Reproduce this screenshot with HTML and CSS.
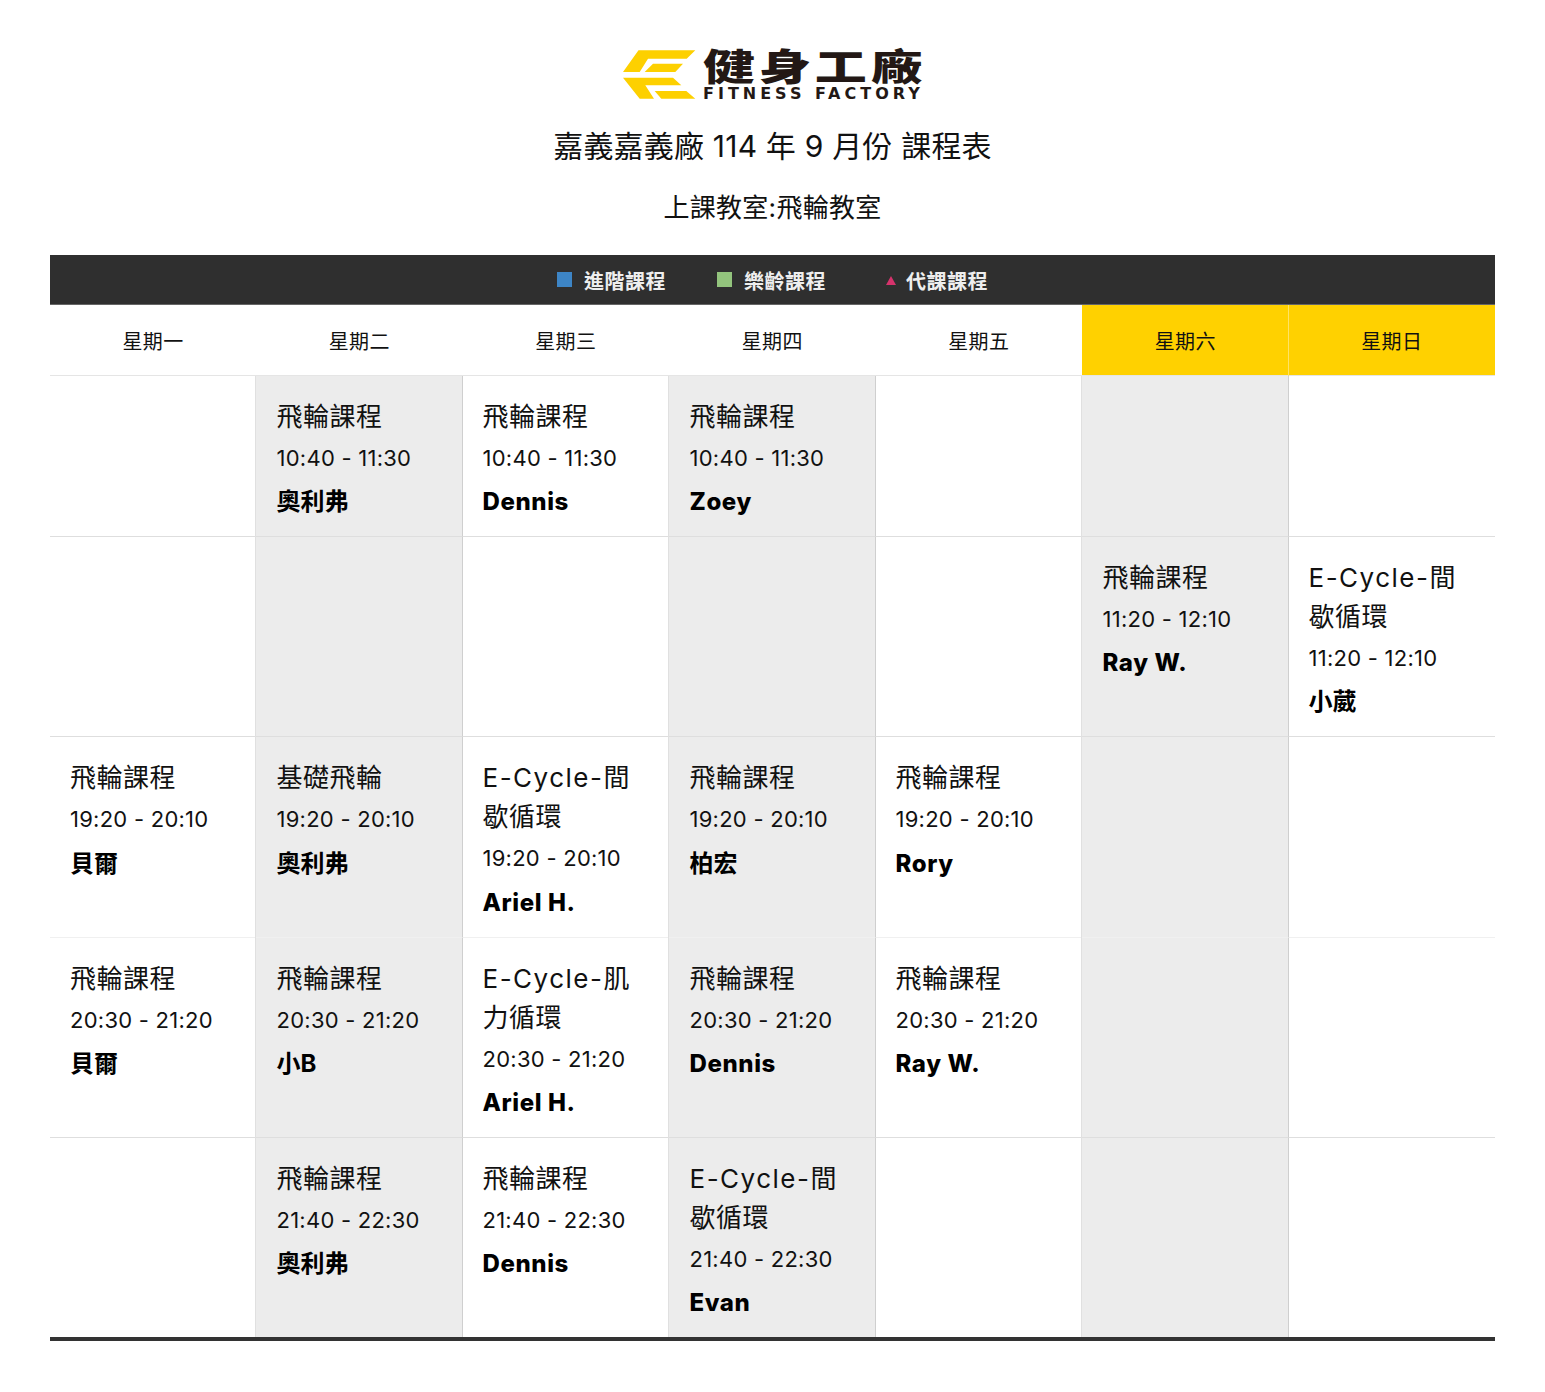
FILE: index.html
```html
<!DOCTYPE html>
<html lang="zh-Hant">
<head>
<meta charset="utf-8">
<title>課程表</title>
<link rel="stylesheet" href="styles.css">
</head>
<body>
<header class="head">
  <div class="logo">
    <svg class="logo-mark" viewBox="0 0 82 58" width="82" height="58" aria-hidden="true">
      <polygon points="20.5,4.3 77.3,4.3 68.7,12.7 30,12.7 21.7,26 5,26"/>
      <polygon points="35,17.7 65,17.7 57.3,26 26.7,26"/>
      <polygon points="5,31.7 55,31.7 63.3,39.3 27.3,39.3 36,52.7 21.7,52.7"/>
      <polygon points="36.7,45 68.3,45 77.3,52.7 43.3,52.7"/>
    </svg>
    <div class="logo-text">
      <div class="logo-zh">健身工廠</div>
      <div class="logo-en">FITNESS FACTORY</div>
    </div>
  </div>
  <h1 class="title">嘉義嘉義廠 114 年 9 月份 課程表</h1>
  <h2 class="room">上課教室:飛輪教室</h2>
</header>
<main class="schedule">
  <div class="legend">
    <span class="legend-item"><i class="sq sq-blue"></i>進階課程</span>
    <span class="legend-item legend-mid"><i class="sq sq-green"></i>樂齡課程</span>
    <span class="legend-item legend-sub"><i class="tri"></i>代課課程</span>
  </div>
  <table class="table">
    <thead>
      <tr>
        <th>星期一</th><th>星期二</th><th>星期三</th><th>星期四</th><th>星期五</th><th class="we">星期六</th><th class="we">星期日</th>
      </tr>
    </thead>
    <tbody>
      <tr>
        <td></td>
        <td class="alt"><div class="c-name">飛輪課程</div><div class="c-time">10:40 - 11:30</div><div class="c-coach">奧利弗</div></td>
        <td><div class="c-name">飛輪課程</div><div class="c-time">10:40 - 11:30</div><div class="c-coach lat">Dennis</div></td>
        <td class="alt"><div class="c-name">飛輪課程</div><div class="c-time">10:40 - 11:30</div><div class="c-coach lat">Zoey</div></td>
        <td></td>
        <td class="alt"></td>
        <td></td>
      </tr>
      <tr>
        <td></td>
        <td class="alt"></td>
        <td></td>
        <td class="alt"></td>
        <td></td>
        <td class="alt"><div class="c-name">飛輪課程</div><div class="c-time">11:20 - 12:10</div><div class="c-coach lat">Ray W.</div></td>
        <td><div class="c-name"><span class="c-lat">E-Cycle-間</span>歇循環</div><div class="c-time">11:20 - 12:10</div><div class="c-coach">小葳</div></td>
      </tr>
      <tr class="soft">
        <td><div class="c-name">飛輪課程</div><div class="c-time">19:20 - 20:10</div><div class="c-coach">貝爾</div></td>
        <td class="alt"><div class="c-name">基礎飛輪</div><div class="c-time">19:20 - 20:10</div><div class="c-coach">奧利弗</div></td>
        <td><div class="c-name"><span class="c-lat">E-Cycle-間</span>歇循環</div><div class="c-time">19:20 - 20:10</div><div class="c-coach lat">Ariel H.</div></td>
        <td class="alt"><div class="c-name">飛輪課程</div><div class="c-time">19:20 - 20:10</div><div class="c-coach">柏宏</div></td>
        <td><div class="c-name">飛輪課程</div><div class="c-time">19:20 - 20:10</div><div class="c-coach lat">Rory</div></td>
        <td class="alt"></td>
        <td></td>
      </tr>
      <tr>
        <td><div class="c-name">飛輪課程</div><div class="c-time">20:30 - 21:20</div><div class="c-coach">貝爾</div></td>
        <td class="alt"><div class="c-name">飛輪課程</div><div class="c-time">20:30 - 21:20</div><div class="c-coach">小B</div></td>
        <td><div class="c-name"><span class="c-lat">E-Cycle-肌</span>力循環</div><div class="c-time">20:30 - 21:20</div><div class="c-coach lat">Ariel H.</div></td>
        <td class="alt"><div class="c-name">飛輪課程</div><div class="c-time">20:30 - 21:20</div><div class="c-coach lat">Dennis</div></td>
        <td><div class="c-name">飛輪課程</div><div class="c-time">20:30 - 21:20</div><div class="c-coach lat">Ray W.</div></td>
        <td class="alt"></td>
        <td></td>
      </tr>
      <tr class="last">
        <td></td>
        <td class="alt"><div class="c-name">飛輪課程</div><div class="c-time">21:40 - 22:30</div><div class="c-coach">奧利弗</div></td>
        <td><div class="c-name">飛輪課程</div><div class="c-time">21:40 - 22:30</div><div class="c-coach lat">Dennis</div></td>
        <td class="alt"><div class="c-name"><span class="c-lat">E-Cycle-間</span>歇循環</div><div class="c-time">21:40 - 22:30</div><div class="c-coach lat">Evan</div></td>
        <td></td>
        <td class="alt"></td>
        <td></td>
      </tr>
    </tbody>
  </table>
</main>
</body>
</html>
```
FILE: styles.css
```css
* { box-sizing: border-box; }
html, body { margin: 0; padding: 0; background: #fff; }
body {
  padding: 46px 50px 51px;
  color: #111;
  font-family: Inter, "Noto Sans CJK TC", sans-serif;
}
.head { text-align: center; }
.logo {
  display: flex;
  justify-content: center;
  align-items: flex-start;
  height: 58px;
  padding-right: 2px;
}
.logo-mark { display: block; }
.logo-mark polygon { fill: #fdd000; }
.logo-text {
  width: 222px;
  margin-left: 3px;
  text-align: left;
  color: #231815;
}
.logo-zh {
  font-family: "Noto Sans CJK TC", sans-serif;
  font-weight: 900;
  font-size: 52px;
  line-height: 38px;
  height: 38px;
  letter-spacing: 3.9px;
  white-space: nowrap;
  transform: scaleY(0.72);
}
.logo-en {
  margin-top: 3px;
  font-family: "DejaVu Sans", sans-serif;
  font-weight: 700;
  font-size: 16px;
  line-height: 14px;
  letter-spacing: 4px;
  white-space: nowrap;
}
.title {
  margin: 20px 0 0;
  font-size: 30px;
  line-height: 44px;
  font-weight: 400;
  letter-spacing: 0.2px;
}
.room {
  margin: 21px 0 0;
  font-size: 26px;
  line-height: 38px;
  font-weight: 400;
  letter-spacing: 0.3px;
}
.schedule { margin-top: 28px; }
.legend {
  display: flex;
  justify-content: center;
  align-items: center;
  height: 50px;
  padding-top: 1px;
  background: #2f2f2f;
  border-bottom: 1px solid #666;
  color: #eee;
  font-size: 20px;
  font-weight: 700;
  letter-spacing: 0.5px;
  gap: 52px;
}
.legend-item { display: inline-flex; align-items: center; gap: 12px; }
.legend-mid { margin-left: -1px; }
.legend-sub { margin-left: 8px; gap: 10px; }
.sq { display: block; width: 15px; height: 15px; margin-top: -2px; }
.sq-blue { background: #3d85c6; }
.sq-green { background: #93c47d; }
.tri {
  display: block;
  width: 0;
  height: 0;
  border-left: 5px solid transparent;
  border-right: 5px solid transparent;
  border-bottom: 9px solid #d6336c;
}
.table {
  width: 100%;
  table-layout: fixed;
  border-collapse: separate;
  border-spacing: 0;
  border-bottom: 4px solid #333;
}
th {
  height: 71px;
  padding: 0;
  font-size: 20px;
  font-weight: 400;
  letter-spacing: 0.3px;
  text-align: center;
  border-bottom: 1px solid #e5e5e5;
}
th:first-child { width: 206px; }
th.we { background: #ffd100; }
th.we + th.we { box-shadow: -1px 0 0 #ffe366; }
td {
  padding: 21px 20px 15px;
  vertical-align: top;
  border-bottom: 1px solid #dedede;
}
.soft td { border-bottom-color: #f0f0f0; }
.last td { border-bottom: 0; }
td.alt {
  background: #ececec;
  padding-left: 20.5px;
  box-shadow: -1px 0 0 #e0e0e0;
  border-right: 1px solid #cfcfcf;
}
.c-name { font-size: 26px; line-height: 39px; letter-spacing: 0.5px; color: #111; }
.c-lat { letter-spacing: 1.5px; }
.c-time { margin-top: -1px; font-size: 22px; line-height: 46.2px; letter-spacing: 0.25px; color: #111; }
.c-coach { padding-top: 1px; font-size: 24px; line-height: 39px; font-weight: 700; color: #000; }
.c-coach.lat { font-weight: 800; letter-spacing: 0.6px; }
```
